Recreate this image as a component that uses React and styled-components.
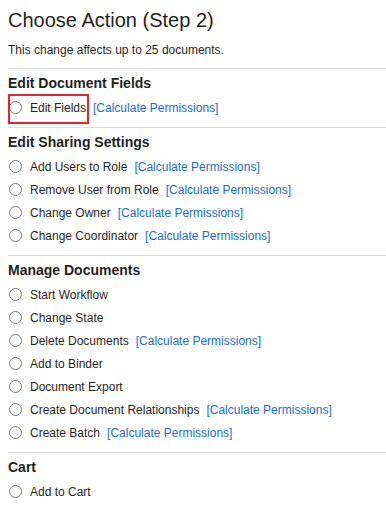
import React from 'react';
import styled, { createGlobalStyle } from 'styled-components';

const GlobalStyle = createGlobalStyle`
  body {
    margin: 8px 0 0 8px;
    background: #ffffff;
    font-family: "Liberation Sans", Arial, sans-serif;
    color: #1f1f1f;
  }
`;

const Page = styled.div`
  display: flex;
  flex-direction: column;
`;

const Title = styled.h1`
  margin: 0;
  font-size: 20px;
  line-height: 24px;
  font-weight: normal;
  color: #1f1f1f;
`;

const Note = styled.p`
  margin: 11px 0;
  font-size: 12px;
  line-height: 14px;
`;

const Section = styled.section`
  border-top: 1px solid #dcdcdc;
  padding: 6px 0 8px;
`;

const Heading = styled.h2`
  margin: 0 0 4px;
  font-size: 14px;
  line-height: 17px;
  font-weight: bold;
  color: #1f1f1f;
`;

const Row = styled.div`
  display: flex;
  align-items: center;
  height: 23px;
  font-size: 12px;
`;

const Choice = styled.label`
  position: relative;
  align-self: stretch;
  display: flex;
  align-items: center;
  gap: 8px;
  padding-left: 1px;

  ${p => p.$marked && `
    &::after {
      content: '';
      position: absolute;
      top: -2px;
      bottom: -5px;
      left: 0;
      right: -3px;
      border: 2px solid #e3242b;
      pointer-events: none;
    }
  `}
`;

const Radio = styled.input.attrs({ type: 'radio' })`
  appearance: none;
  width: 13px;
  height: 13px;
  margin: 0;
  border: 1px solid #7a7a7a;
  border-radius: 50%;
  background: #ffffff;
`;

const PermLink = styled.a`
  margin-left: 7px;
  color: #1a6dcc;
  text-decoration: none;
  cursor: pointer;
`;

const sections = [
  {
    title: 'Edit Document Fields',
    items: [{ label: 'Edit Fields', perm: true, marked: true }],
  },
  {
    title: 'Edit Sharing Settings',
    items: [
      { label: 'Add Users to Role', perm: true },
      { label: 'Remove User from Role', perm: true },
      { label: 'Change Owner', perm: true },
      { label: 'Change Coordinator', perm: true },
    ],
  },
  {
    title: 'Manage Documents',
    items: [
      { label: 'Start Workflow' },
      { label: 'Change State' },
      { label: 'Delete Documents', perm: true },
      { label: 'Add to Binder' },
      { label: 'Document Export' },
      { label: 'Create Document Relationships', perm: true },
      { label: 'Create Batch', perm: true },
    ],
  },
  {
    title: 'Cart',
    items: [{ label: 'Add to Cart' }],
  },
];

export default function App() {
  return (
    <Page>
      <GlobalStyle />
      <Title>Choose Action (Step 2)</Title>
      <Note>This change affects up to 25 documents.</Note>
      {sections.map(section => (
        <Section key={section.title}>
          <Heading>{section.title}</Heading>
          {section.items.map(item => (
            <Row key={item.label}>
              <Choice $marked={item.marked}>
                <Radio name="action" />
                <span>{item.label}</span>
              </Choice>
              {item.perm && <PermLink>[Calculate Permissions]</PermLink>}
            </Row>
          ))}
        </Section>
      ))}
    </Page>
  );
}
